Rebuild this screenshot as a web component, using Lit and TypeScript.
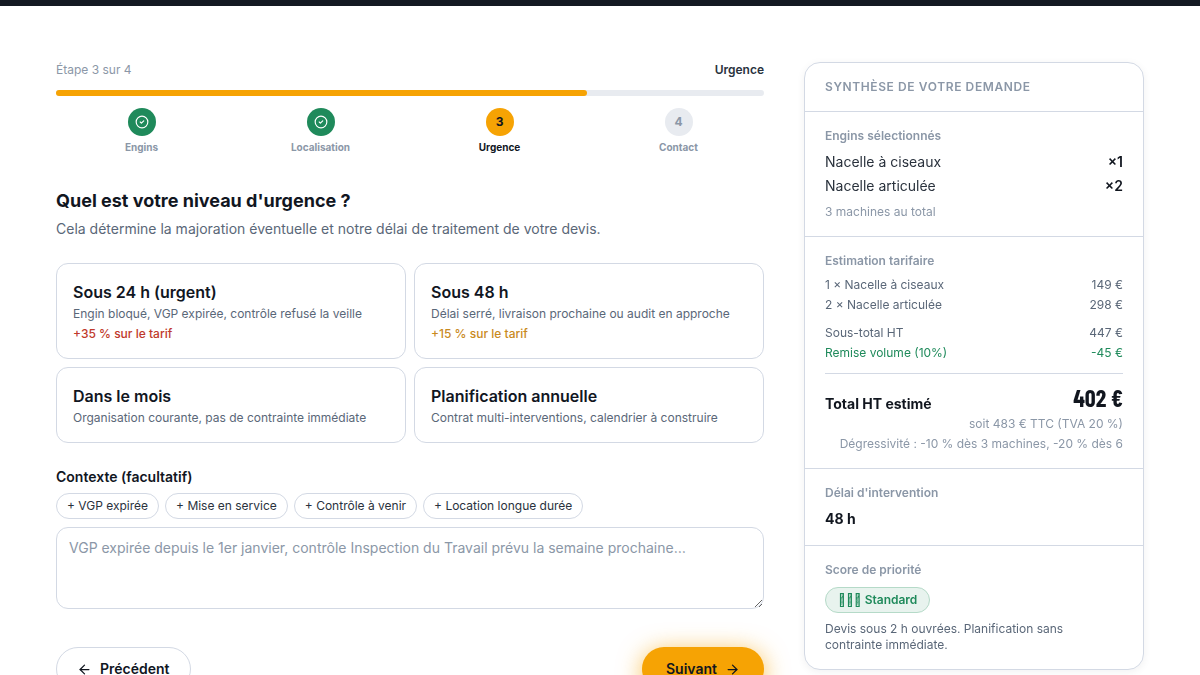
import { LitElement, html, css, svg, nothing } from "lit";
import { customElement, state } from "lit/decorators.js";
import { classMap } from "lit/directives/class-map.js";

interface Urgency {
  id: string;
  title: string;
  text: string;
  fee?: string;
  tone?: string;
}

const STEPS = ["Engins", "Localisation", "Urgence", "Contact"];
const CURRENT = 3;

const URGENCIES: Urgency[] = [
  { id: "24h", title: "Sous 24 h (urgent)", text: "Engin bloqué, VGP expirée, contrôle refusé la veille", fee: "+35 % sur le tarif", tone: "red" },
  { id: "48h", title: "Sous 48 h", text: "Délai serré, livraison prochaine ou audit en approche", fee: "+15 % sur le tarif", tone: "amber" },
  { id: "month", title: "Dans le mois", text: "Organisation courante, pas de contrainte immédiate" },
  { id: "year", title: "Planification annuelle", text: "Contrat multi-interventions, calendrier à construire" },
];

const CHIPS = ["VGP expirée", "Mise en service", "Contrôle à venir", "Location longue durée"];

const icon = (content: unknown) => html`<svg class="icon" viewBox="0 0 24 24" aria-hidden="true">${content}</svg>`;
const checkIcon = icon(svg`<circle cx="12" cy="12" r="10"></circle><path d="m9 12 2 2 4-4"></path>`);
const leftIcon = icon(svg`<path d="m12 19-7-7 7-7"></path><path d="M19 12H5"></path>`);
const rightIcon = icon(svg`<path d="M5 12h14"></path><path d="m12 5 7 7-7 7"></path>`);

@customElement("app-root")
export class AppRoot extends LitElement {
  static styles = css`
    :host {
      display: block;
      height: 100vh;
      overflow: hidden;
      background: #fff;
      color: #11161f;
      font-family: Inter, sans-serif;
      font-size: 14px;
      line-height: 20px;
    }
    * { box-sizing: border-box; }
    h2, h3, p { margin: 0; }
    button, textarea { font: inherit; color: inherit; }
    button { cursor: pointer; }
    .topbar { height: 6px; background: #141922; }
    .page {
      display: grid;
      grid-template-columns: minmax(0, 1fr) 340px;
      gap: 40px;
      align-items: start;
      max-width: 1200px;
      margin: 0 auto;
      padding: 56px;
    }
    .icon {
      width: 15px;
      height: 15px;
      fill: none;
      stroke: currentColor;
      stroke-width: 2;
      stroke-linecap: round;
      stroke-linejoin: round;
    }
    .small { font-size: 12px; line-height: 16px; }
    .muted { color: #8b97a7; }
    .row { display: flex; justify-content: space-between; }
    .strong { font-weight: 600; color: #2a323d; }

    .track { height: 6px; margin: 12px 0; border-radius: 3px; background: #e8ebf0; }
    .fill { height: 100%; border-radius: 3px; background: #f6a304; }
    .steps { display: grid; grid-template-columns: repeat(4, 1fr); gap: 8px; }
    .step {
      display: flex;
      flex-direction: column;
      align-items: center;
      gap: 4px;
      font-size: 10px;
      line-height: 14px;
      font-weight: 700;
      color: #8b97a7;
    }
    .dot {
      display: flex;
      align-items: center;
      justify-content: center;
      width: 28px;
      height: 28px;
      border-radius: 50%;
      background: #e8ebf0;
      font-size: 12px;
      font-weight: 700;
    }
    .dot .icon { width: 14px; height: 14px; }
    .done .dot { background: #1f8a5b; color: #fff; }
    .current, .current .dot { color: #11161f; }
    .current .dot { background: #f6a304; }

    .title { margin-top: 36px; font-size: 18px; line-height: 22px; font-weight: 700; }
    .lead { margin-top: 7px; color: #5a6778; }
    .options { display: grid; grid-template-columns: 1fr 1fr; gap: 8px; margin-top: 24px; }
    .option {
      display: flex;
      flex-direction: column;
      justify-content: center;
      padding: 16px;
      border: 1px solid #d3d9e4;
      border-radius: 12px;
      background: #fff;
      text-align: left;
    }
    .option.selected { border-color: #f6a304; }
    .option-title { margin-bottom: 2px; font-size: 16px; line-height: 24px; font-weight: 600; }
    .option-text { color: #5a6778; }
    .fee { margin-top: 4px; font-weight: 500; }
    .red { color: #c0392b; }
    .amber { color: #c98a1e; }

    .label { display: block; margin-top: 24px; font-weight: 600; }
    .chips { display: flex; flex-wrap: wrap; gap: 6px; margin: 6px 0 8px; }
    .chip {
      padding: 4px 10px;
      border: 1px solid #d3d9e4;
      border-radius: 13px;
      background: #fff;
      color: #2a323d;
    }
    .context {
      display: block;
      width: 100%;
      padding: 10px 12px;
      border: 1px solid #d3d9e4;
      border-radius: 12px;
      background: #fff;
      resize: vertical;
    }
    .context::placeholder { color: #8b97a7; }
    .actions { display: flex; justify-content: space-between; margin-top: 38px; }
    .action {
      display: flex;
      align-items: center;
      gap: 8px;
      height: 44px;
      border-radius: 22px;
      font-weight: 600;
    }
    .back { padding: 0 20px; border: 1px solid #d3d9e4; background: #fff; }
    .next { padding: 0 24px; border: 0; background: #f6a304; box-shadow: 0 4px 24px rgba(246, 163, 4, 0.7); }

    .summary {
      position: sticky;
      top: 24px;
      will-change: transform;
      border: 1px solid #d3d9e4;
      border-radius: 16px;
      background: #fff;
      box-shadow: 0 2px 8px rgba(18, 22, 28, 0.06);
    }
    .summary-head {
      padding: 16px 20px;
      font-weight: 600;
      letter-spacing: 0.05em;
      text-transform: uppercase;
    }
    .section { padding: 16px 20px; border-top: 1px solid #d3d9e4; }
    .section-title { margin-bottom: 8px; font-weight: 600; }
    .machines { display: grid; gap: 4px; margin-bottom: 8px; color: #2a323d; }
    .count { font-weight: 600; color: #11161f; }
    .value { font-weight: 700; }
    .lines { display: grid; gap: 4px; color: #5a6778; }
    .subtotal { margin-top: 12px; padding-bottom: 12px; border-bottom: 1px solid #d3d9e4; }
    .green { color: #1f8a5b; }
    .total { align-items: flex-end; margin: 12px 0 2px; font-weight: 700; }
    .price {
      padding-bottom: 4px;
      font-family: "Barlow Condensed", "Roboto Condensed", "Liberation Sans Narrow", sans-serif;
      font-size: 24px;
      line-height: 24px;
      font-weight: 700;
    }
    .notes { display: grid; gap: 4px; text-align: right; }
    .badge {
      display: inline-block;
      margin: 1px 0 8px;
      padding: 4px 12px;
      border: 1px solid #b5dac8;
      border-radius: 13px;
      background: #e8f3ee;
      font-weight: 600;
      vertical-align: top;
    }
    .advice { color: #5a6778; }
    @media (max-width: 900px) {
      .page { grid-template-columns: minmax(0, 1fr); }
    }
  `;

  @state() private selected = "";
  @state() private context = "";

  private addContext(text: string) {
    this.context = this.context ? `${this.context}, ${text}` : text;
  }

  private renderStep(name: string, index: number) {
    const n = index + 1;
    return html`<div class=${classMap({ step: true, done: n < CURRENT, current: n === CURRENT })}>
      <span class="dot">${n < CURRENT ? checkIcon : n}</span><span>${name}</span>
    </div>`;
  }

  private renderOption(o: Urgency) {
    return html`<button
      type="button"
      class=${classMap({ option: true, selected: this.selected === o.id })}
      aria-pressed=${this.selected === o.id}
      @click=${() => (this.selected = o.id)}
    >
      <span class="option-title">${o.title}</span>
      <span class="option-text small">${o.text}</span>
      ${o.fee ? html`<span class="fee small ${o.tone}">${o.fee}</span>` : nothing}
    </button>`;
  }

  render() {
    return html`
      <div class="topbar"></div>
      <div class="page">
        <main>
          <div class="row small">
            <span class="muted">Étape ${CURRENT} sur ${STEPS.length}</span>
            <span class="strong">${STEPS[CURRENT - 1]}</span>
          </div>
          <div class="track"><div class="fill" style="width:${(CURRENT / STEPS.length) * 100}%"></div></div>
          <div class="steps">${STEPS.map((s, i) => this.renderStep(s, i))}</div>

          <h2 class="title">Quel est votre niveau d'urgence ?</h2>
          <p class="lead">Cela détermine la majoration éventuelle et notre délai de traitement de votre devis.</p>
          <div class="options">${URGENCIES.map((o) => this.renderOption(o))}</div>

          <label class="label" for="context">Contexte (facultatif)</label>
          <div class="chips">
            ${CHIPS.map((c) => html`<button type="button" class="chip small" @click=${() => this.addContext(c)}>+ ${c}</button>`)}
          </div>
          <textarea
            id="context"
            class="context"
            rows="3"
            placeholder="VGP expirée depuis le 1er janvier, contrôle Inspection du Travail prévu la semaine prochaine…"
            .value=${this.context}
          ></textarea>

          <div class="actions">
            <button type="button" class="action back">${leftIcon}Précédent</button>
            <button type="button" class="action next">Suivant${rightIcon}</button>
          </div>
        </main>

        <aside class="summary">
          <h2 class="summary-head small muted">Synthèse de votre demande</h2>
          <section class="section">
            <h3 class="section-title small muted">Engins sélectionnés</h3>
            <div class="machines">
              <div class="row"><span>Nacelle à ciseaux</span><span class="count">×1</span></div>
              <div class="row"><span>Nacelle articulée</span><span class="count">×2</span></div>
            </div>
            <p class="small muted">3 machines au total</p>
          </section>
          <section class="section">
            <h3 class="section-title small muted">Estimation tarifaire</h3>
            <div class="lines small">
              <div class="row"><span>1 × Nacelle à ciseaux</span><span>149 €</span></div>
              <div class="row"><span>2 × Nacelle articulée</span><span>298 €</span></div>
            </div>
            <div class="lines subtotal small">
              <div class="row"><span>Sous-total HT</span><span>447 €</span></div>
              <div class="row green"><span>Remise volume (10%)</span><span>-45 €</span></div>
            </div>
            <div class="row total"><span>Total HT estimé</span><span class="price">402 €</span></div>
            <div class="notes small muted">
              <p>soit 483 € TTC (TVA 20 %)</p>
              <p>Dégressivité : -10 % dès 3 machines, -20 % dès 6</p>
            </div>
          </section>
          <section class="section">
            <h3 class="section-title small muted">Délai d'intervention</h3>
            <p class="value">48 h</p>
          </section>
          <section class="section">
            <h3 class="section-title small muted">Score de priorité</h3>
            <span class="badge small green">\u{F0000}\u{F0000}\u{F0000} Standard</span>
            <p class="advice small">Devis sous 2 h ouvrées. Planification sans contrainte immédiate.</p>
          </section>
        </aside>
      </div>
    `;
  }
}
